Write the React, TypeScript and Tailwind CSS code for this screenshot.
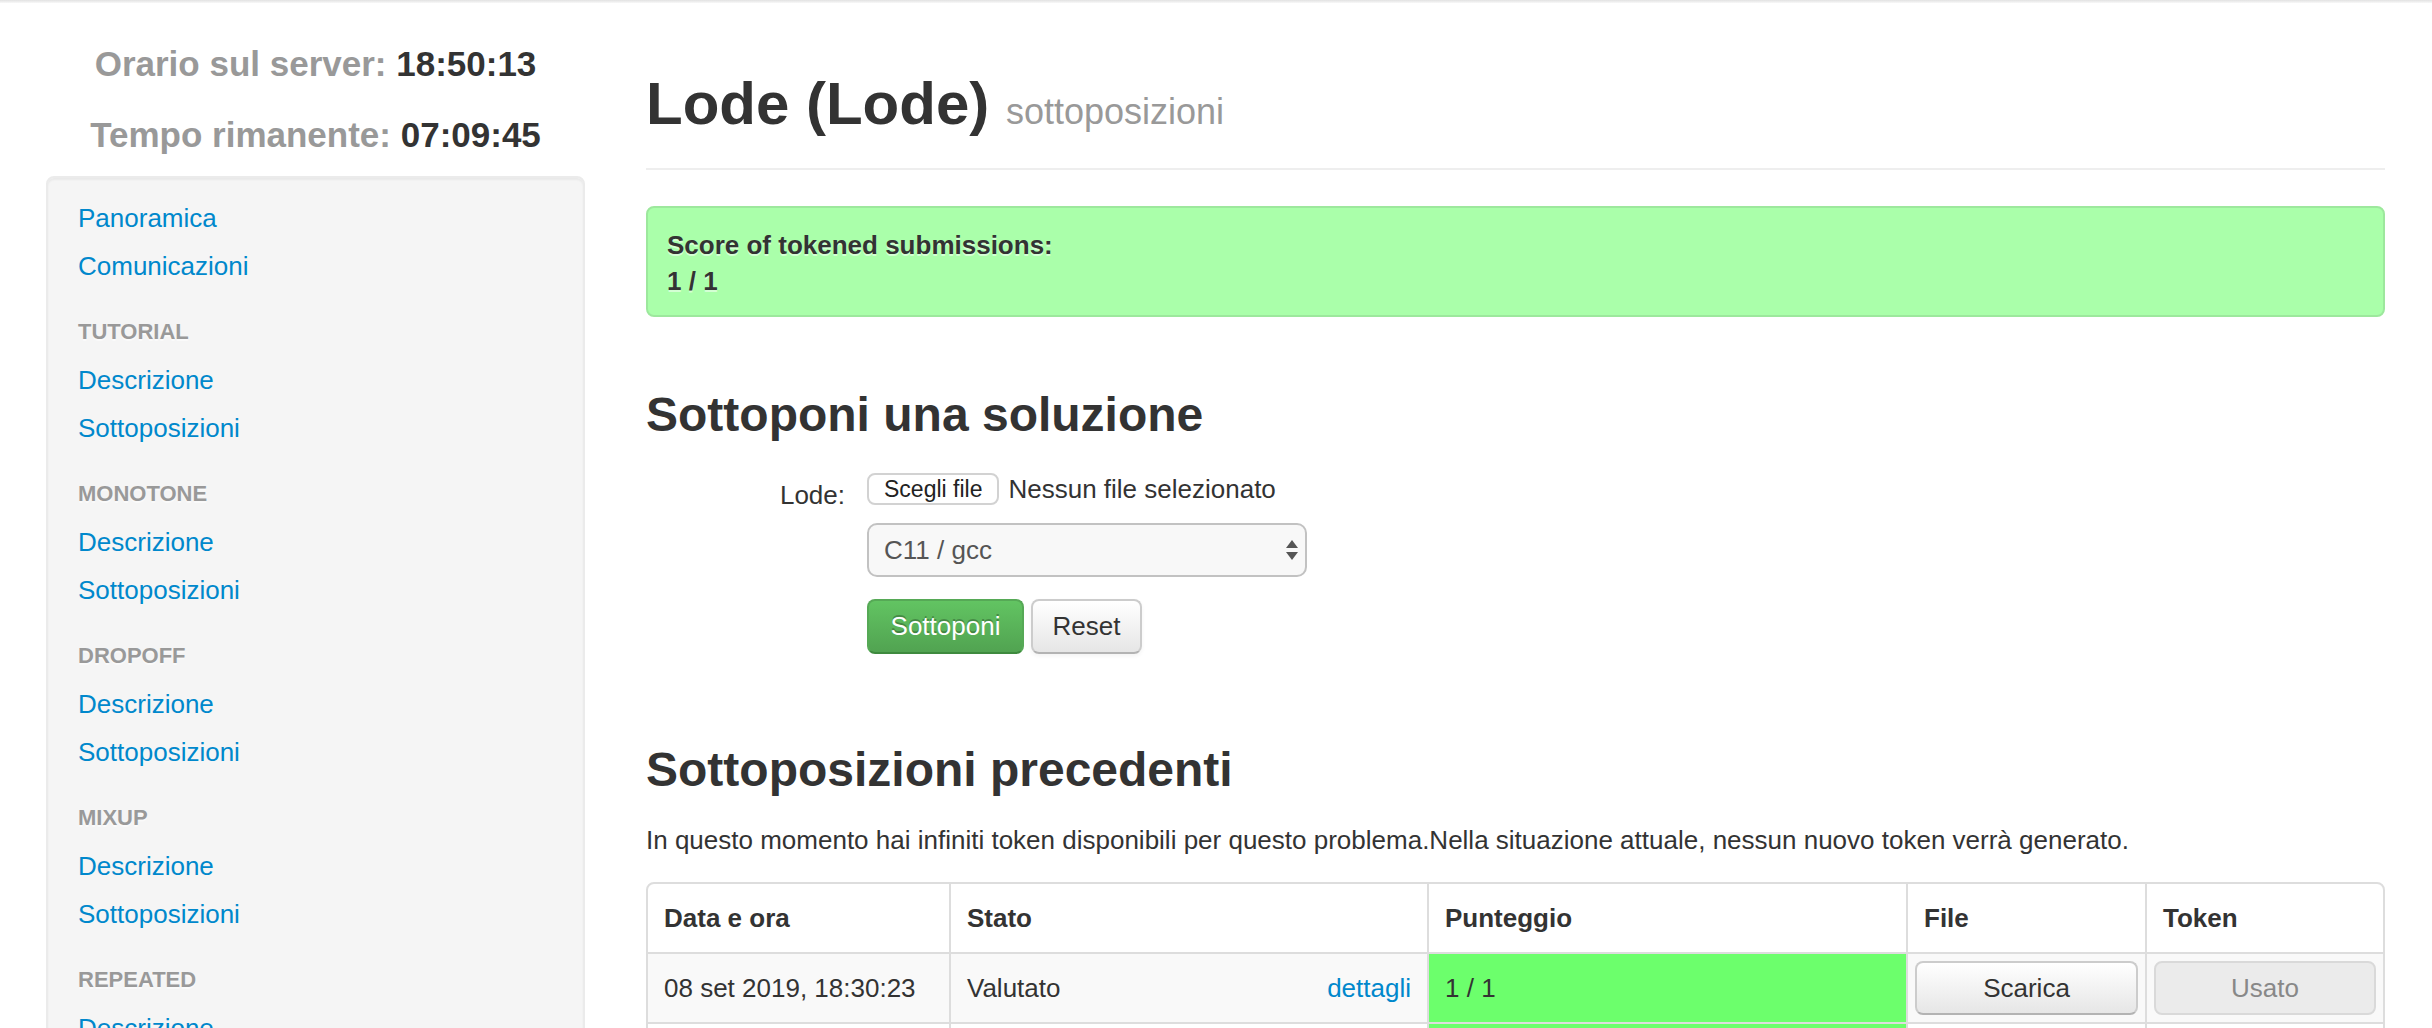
import React from "react"

const tasks = ["Tutorial", "Monotone", "Dropoff", "Mixup", "Repeated", "Lode"]

function NavLink({ children }: { children: React.ReactNode }) {
  return (
    <li>
      <a href="#" className="block px-[30px] py-[6px] text-[26px] leading-[36px] text-[#0088cc]">
        {children}
      </a>
    </li>
  )
}

function NavHeader({ children }: { children: React.ReactNode }) {
  return (
    <li className="mt-[18px] px-[30px] py-[6px] text-[22px] font-bold uppercase leading-[36px] text-[#999] [text-shadow:0_2px_0_rgba(255,255,255,0.5)]">
      {children}
    </li>
  )
}

function Sidebar() {
  return (
    <aside className="w-[539px] shrink-0 pt-[25px]">
      <div className="text-center text-[35px] font-bold leading-[71px]">
        <div>
          <span className="text-[#999]">Orario sul server:</span> <span className="text-[#333]">18:50:13</span>
        </div>
        <div>
          <span className="text-[#999]">Tempo rimanente:</span> <span className="text-[#333]">07:09:45</span>
        </div>
      </div>
      <div className="mt-[6px] rounded-[8px] border-2 border-[#ebebeb] bg-[#f5f5f5] py-[16px] shadow-[inset_0_2px_2px_rgba(0,0,0,0.05)]">
        <ul>
          <NavLink>Panoramica</NavLink>
          <NavLink>Comunicazioni</NavLink>
          {tasks.map((t) => (
            <React.Fragment key={t}>
              <NavHeader>{t}</NavHeader>
              <NavLink>Descrizione</NavLink>
              <NavLink>Sottoposizioni</NavLink>
            </React.Fragment>
          ))}
        </ul>
      </div>
    </aside>
  )
}

function SubmitForm() {
  return (
    <div className="mt-[22px] flex">
      <label className="w-[199px] shrink-0 pt-[4px] text-right text-[26px] leading-[36px]">Lode:</label>
      <div className="ml-[22px]">
        {/* file input */}
        <div className="flex h-[32px] items-center">
          <span className="flex h-[32px] items-center rounded-[8px] border-2 border-[#d2d2d2] bg-white px-[15px] text-[23px] text-[#222]">
            Scegli file
          </span>
          <span className="ml-[9px] text-[26px] leading-[36px]">Nessun file selezionato</span>
        </div>
        {/* language select */}
        <div className="mt-[18px] flex h-[54px] w-[440px] items-center justify-between rounded-[10px] border-2 border-[#c2c2c2] bg-[#f8f8f8] pl-[15px] pr-[7px]">
          <span className="text-[26px] leading-[36px] text-[#555]">C11 / gcc</span>
          <svg width="12" height="20" viewBox="0 0 12 20">
            <polygon points="6,0 12,8 0,8" fill="#555" />
            <polygon points="0,12 12,12 6,20" fill="#555" />
          </svg>
        </div>
        <div className="mt-[22px] flex gap-[7px]">
          <button className="h-[55px] w-[157px] rounded-[8px] border-2 border-[#56a956] border-b-[#3e8a3e] bg-linear-to-b from-[#62c462] to-[#51a351] text-[26px] text-white [text-shadow:0_-2px_0_rgba(0,0,0,0.25)]">
            Sottoponi
          </button>
          <button className="h-[55px] w-[111px] rounded-[8px] border-2 border-[#ccc] border-b-[#b3b3b3] bg-linear-to-b from-white to-[#e6e6e6] text-[26px] text-[#333] shadow-[0_2px_4px_rgba(0,0,0,0.05)]">
            Reset
          </button>
        </div>
      </div>
    </div>
  )
}

const cell = "border-l-2 border-[#ddd] p-[16px] text-[26px] leading-[36px]"

function Row({ striped }: { striped: boolean }) {
  const bg = striped ? "bg-[#f9f9f9]" : "bg-white"
  return (
    <>
      <div className={`border-t-2 border-[#ddd] p-[16px] text-[26px] leading-[36px] ${bg}`}>08 set 2019, 18:30:23</div>
      <div className={`${cell} flex justify-between border-t-2 ${bg}`}>
        <span>Valutato</span>
        <a href="#" className="text-[#0088cc]">dettagli</a>
      </div>
      <div className={`${cell} border-t-2 bg-[#6cff6c]`}>1 / 1</div>
      <div className={`border-l-2 border-t-2 border-[#ddd] p-[7px] ${bg}`}>
        <button className="h-[54px] w-full rounded-[8px] border-2 border-[#ccc] border-b-[#b3b3b3] bg-linear-to-b from-white to-[#e6e6e6] text-[26px] text-[#333]">
          Scarica
        </button>
      </div>
      <div className={`border-l-2 border-t-2 border-[#ddd] p-[7px] ${bg}`}>
        <button disabled className="h-[54px] w-full rounded-[8px] border-2 border-[#d9d9d9] bg-[#ebebeb] text-[26px] text-[#888]">
          Usato
        </button>
      </div>
    </>
  )
}

function SubmissionsTable() {
  return (
    <div className="mt-[24px] grid grid-cols-[301px_478px_479px_239px_238px] overflow-hidden rounded-[8px] border-2 border-[#ddd]">
      <div className="p-[16px] text-[26px] font-bold leading-[36px]">Data e ora</div>
      <div className={`${cell} font-bold`}>Stato</div>
      <div className={`${cell} font-bold`}>Punteggio</div>
      <div className={`${cell} font-bold`}>File</div>
      <div className={`${cell} font-bold`}>Token</div>
      <Row striped />
      <Row striped={false} />
    </div>
  )
}

export default function App() {
  return (
    <div className="min-h-screen bg-white font-['Liberation_Sans',Arial,sans-serif] text-[#333]">
      <div className="h-[3px] bg-linear-to-b from-[#e2e2e2] to-[#f8f8f8]" />
      <div className="flex pl-[46px]">
        <Sidebar />
        <main className="ml-[61px] w-[1739px] shrink-0 pt-[65px]">
          <h1 className="border-b-2 border-[#eee] pb-[20px] text-[60px] font-bold leading-[72px]">
            Lode (Lode) <small className="text-[36px] font-normal text-[#999]">sottoposizioni</small>
          </h1>

          <div className="mt-[36px] rounded-[8px] border-2 border-[#9de89d] bg-[#aaffaa] px-[19px] pb-[16px] pt-[19px] text-[26px] font-bold leading-[36px] [text-shadow:0_2px_0_rgba(255,255,255,0.5)]">
            <div>Score of tokened submissions:</div>
            <div>1 / 1</div>
          </div>

          <h2 className="mt-[62px] text-[48px] font-bold leading-[72px]">Sottoponi una soluzione</h2>
          <SubmitForm />

          <h2 className="mt-[80px] text-[48px] font-bold leading-[72px]">Sottoposizioni precedenti</h2>
          <p className="mt-[16px] text-[26px] leading-[36px]">
            In questo momento hai infiniti token disponibili per questo problema.Nella situazione attuale, nessun nuovo token verrà generato.
          </p>
          <SubmissionsTable />
        </main>
      </div>
    </div>
  )
}
